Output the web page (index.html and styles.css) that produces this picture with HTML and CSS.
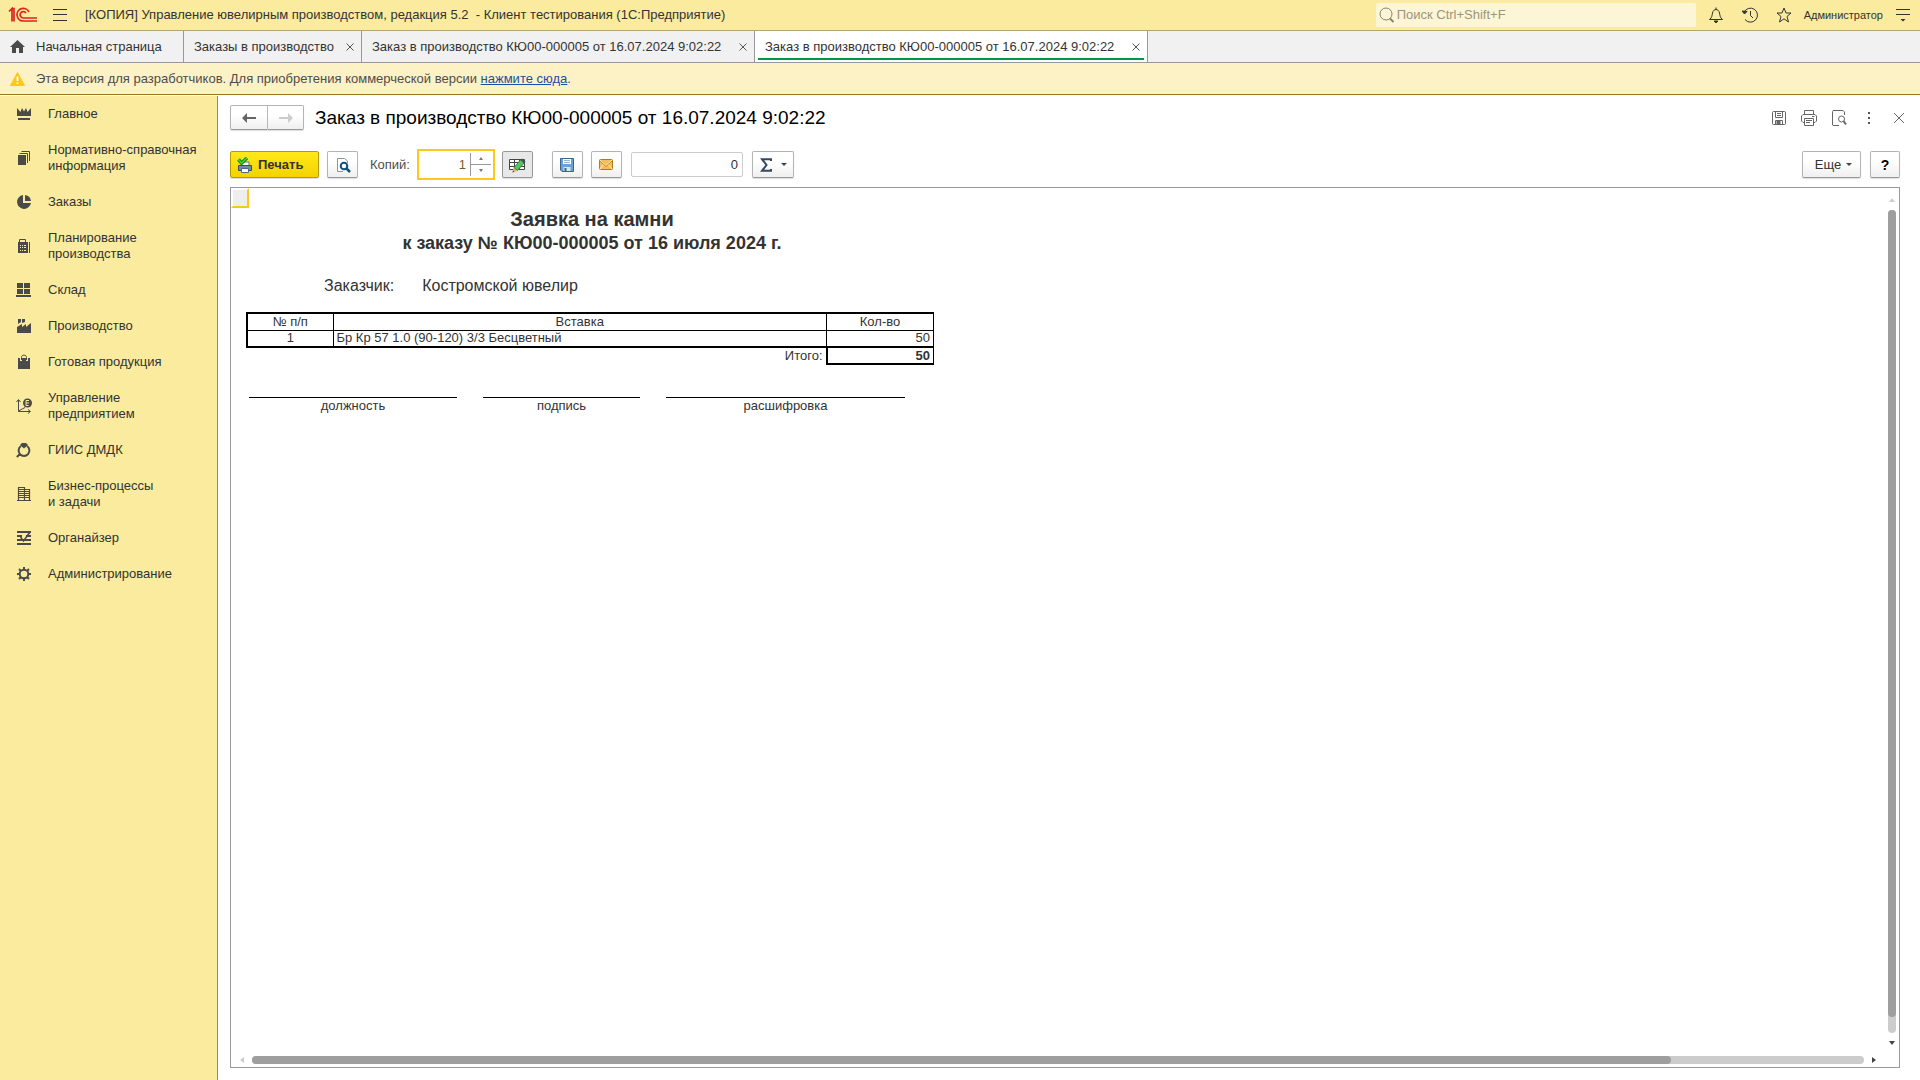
FILE: index.html
```html
<!DOCTYPE html>
<html lang="ru">
<head>
<meta charset="utf-8">
<title>Управление ювелирным производством</title>
<link rel="stylesheet" href="styles.css">
</head>
<body>
<header class="topbar">
  <svg class="logo" width="30" height="16" viewBox="0 0 30 16" fill="none" stroke="#d9251c" stroke-width="2" aria-label="1С"><path d="M1 4.500L4 1.500V14.500M6 14.500V1.500H3.500M21 5A6.300 6.300 0 1 0 15 14H29M18 6A3.200 3.200 0 1 0 15 11H29" stroke-width="1.700"/></svg>
  <button class="flat menu-btn" aria-label="Меню"><svg width="14" height="12" stroke="#333" viewBox="0 0 14 12"><path d="M0 .5H14M0 5.500H14M0 11.500H14"/></svg></button>
  <h1 class="app-title">[КОПИЯ] Управление ювелирным производством, редакция 5.2 &nbsp;- Клиент тестирования (1С:Предприятие)</h1>
  <label class="search">
    <svg width="16" height="16" viewBox="0 0 16 16" fill="none" stroke="#8b8468"><circle cx="7" cy="7" r="6"/><path d="M11 11.500L14.500 15" stroke-width="2"/></svg>
    <input type="text" placeholder="Поиск Ctrl+Shift+F" aria-label="Поиск">
  </label>
  <div class="top-actions">
    <button class="flat" aria-label="Уведомления"><svg width="16" height="16" viewBox="0 0 16 16" fill="none" stroke="#333"><path d="M1.500 12.500C4 10.500 4 8.500 4.500 6C5 3.500 6.500 2.500 8 2.500S11 3.500 11.500 6C12 8.500 12 10.500 14.500 12.500ZM8 2.500V.5"/><path d="M6 14h4l-2 2z" fill="#333"/></svg></button>
    <button class="flat" aria-label="История"><svg width="16" height="16" viewBox="0 0 16 16" fill="none" stroke="#333"><path d="M2 5.500A7 7 0 1 1 3 12.500M8.500 4V8.500L11 11"/><path d="M0 4l2.500 3L5 4.500z" fill="#333"/></svg></button>
    <button class="flat" aria-label="Избранное"><svg width="16" height="16" viewBox="0 0 16 16" fill="none" stroke="#333"><path d="M8 1L10 6H15L11 9.500L12.500 15L8 11.800L3.500 15L5 9.500L1 6H6Z"/></svg></button>
  </div>
  <a class="user" href="#">Администратор</a>
  <button class="flat" aria-label="Сервис"><svg width="14" height="14" viewBox="0 0 14 14" stroke="#333"><path d="M0 1.500H14M0 6.500H14"/><path d="M4.500 11h5L7 13.500z" fill="#333" stroke="none"/></svg></button>
</header>

<nav class="tabs" aria-label="Открытые окна">
  <a class="tab home" href="#"><svg width="15" height="13" viewBox="0 0 15 13" fill="#4a4a4a"><path d="M7.500 0L15 7H13V13H9V8H6V13H2V7H0Z"/></svg>Начальная страница</a>
  <div class="tab list"><a href="#">Заказы в производство</a><button class="flat" aria-label="Закрыть"><svg width="8" height="8" viewBox="0 0 8 8" stroke="#555"><path d="M.5 .5L7.500 7.500M7.500 .5L.5 7.500"/></svg></button></div>
  <div class="tab order"><a href="#">Заказ в производство КЮ00-000005 от 16.07.2024 9:02:22</a><button class="flat" aria-label="Закрыть"><svg width="8" height="8" viewBox="0 0 8 8" stroke="#555"><path d="M.5 .5L7.500 7.500M7.500 .5L.5 7.500"/></svg></button></div>
  <div class="tab order active"><a href="#">Заказ в производство КЮ00-000005 от 16.07.2024 9:02:22</a><button class="flat" aria-label="Закрыть"><svg width="8" height="8" viewBox="0 0 8 8" stroke="#555"><path d="M.5 .5L7.500 7.500M7.500 .5L.5 7.500"/></svg></button></div>
</nav>

<div class="notice">
  <svg width="15" height="14" viewBox="0 0 15 14"><path d="M7.500 .5L14.500 13.500H.5Z" fill="#fbc81e" stroke="#fbc81e" stroke-linejoin="round"/><path d="M7.500 4.500V9M7.500 10.500V12" stroke="#fff" stroke-width="1.800"/></svg>
  <p>Эта версия для разработчиков. Для приобретения коммерческой версии <a href="#">нажмите сюда</a>.</p>
</div>

<div class="workspace">
  <nav class="sidebar" aria-label="Разделы">
    <a href="#"><svg viewBox="0 0 16 16"><path d="M1 2L4.500 6L6 2L8 5.500L10 2L11.500 6L15 2V10H1ZM2 12H14V14H2Z"/></svg>Главное</a>
    <a href="#"><svg viewBox="0 0 16 16"><path d="M2 5H10V15H2Z"/><path d="M3.500 3.500H11.500V13M5.500 1.500H13.500V11" fill="none" stroke="#4a4a4a"/></svg>Нормативно-справочная<br>информация</a>
    <a href="#"><svg viewBox="0 0 16 16"><path d="M7 1A7 7 0 1 0 15 9H7Z"/><path d="M9 1A7 7 0 0 1 15 7H9Z"/></svg>Заказы</a>
    <a href="#"><svg viewBox="0 0 16 16"><path d="M3.500 5V1.500H9.500V5M13.500 4V15" fill="none" stroke="#4a4a4a"/><path fill-rule="evenodd" d="M2 4H12V15H2ZM4 7V8H5V7ZM6 7V8H7V7ZM8 7V8H10V7ZM4 9V10H5V9ZM6 9V10H7V9ZM8 9V10H10V9ZM4 12V13H5V12ZM6 12V13H7V12ZM8 12V13H10V12Z"/></svg>Планирование<br>производства</a>
    <a href="#"><svg viewBox="0 0 16 16"><path d="M1 1H7V6H1ZM8 1H14V6H8ZM1 7H7V12H1ZM8 7H14V12H8ZM0 13H15V15H0Z"/></svg>Склад</a>
    <a href="#"><svg viewBox="0 0 16 16"><path d="M1 15V9L6 6V9L10 6V9L15 5V15ZM2 1H5V4L2 6ZM6 1H9V4L6 5Z"/></svg>Производство</a>
    <a href="#"><svg viewBox="0 0 16 16"><path d="M2 4H14V15H2Z"/><path d="M5 7V4C5 .5 11 .5 11 4V7" fill="none" stroke="#faeb9e" stroke-width="2"/><path d="M5.500 6V3.500C5.500 .3 10.500 .3 10.500 3.500V6" fill="none" stroke="#4a4a4a"/></svg>Готовая продукция</a>
    <a href="#"><svg viewBox="0 0 16 16"><path d="M2.500 2V13.500H14M2.500 13L9 9.500M.5 4L2.500 1.500L4.500 4M12 11.500L14.500 13.500L12 15.500" fill="none" stroke="#4a4a4a"/><circle cx="11.500" cy="5" r="4.500"/><path d="M10 2.500H13M10 5H13M10 7.500H12.500M10 2.500V7.500" stroke="#faeb9e" fill="none"/></svg>Управление<br>предприятием</a>
    <a href="#"><svg viewBox="0 0 16 16"><path d="M5 4A5.400 5.400 0 1 0 11 4M4 12L.8 15" fill="none" stroke="#4a4a4a" stroke-width="2"/><path d="M6 1H10L12 3L8 6.500L4 3Z"/></svg>ГИИС ДМДК</a>
    <a href="#"><svg viewBox="0 0 16 16"><path d="M1 14.500H15M2.500 14V1.500H8.500V14M8.500 3.500H13.500V14M3 3.500H8M3 5.500H13M3 7.500H13M3 9.500H13M3 11.500H13" fill="none" stroke="#4a4a4a" stroke-width="1.200"/></svg>Бизнес-процессы<br>и задачи</a>
    <a href="#"><svg viewBox="0 0 16 16"><path d="M1 2H15M1 6H6M10 6H15M1 10H15M1 14H15" fill="none" stroke="#4a4a4a" stroke-width="2"/><path d="M14 2L7.500 11L4.500 7" fill="none" stroke="#4a4a4a" stroke-width="1.500"/></svg>Органайзер</a>
    <a href="#"><svg viewBox="0 0 16 16"><circle cx="8" cy="8" r="4.300" fill="none" stroke="#4a4a4a" stroke-width="2"/><path d="M8 1V4M8 12V15M1 8H4M12 8H15M3 3L5 5M11 11L13 13M13 3L11 5M5 11L3 13" stroke="#4a4a4a" stroke-width="2"/></svg>Администрирование</a>
  </nav>

  <main class="page">
    <div class="page-head">
      <div class="history">
        <button class="btn" aria-label="Назад"><svg width="14" height="10" viewBox="0 0 14 10" fill="#666"><path d="M0 5L5 0V4H14V6H5V10Z"/></svg></button>
        <button class="btn" aria-label="Вперед" disabled><svg width="14" height="10" viewBox="0 0 14 10" fill="#ccc"><path d="M14 5L9 0V4H0V6H9V10Z"/></svg></button>
      </div>
      <h2>Заказ в производство КЮ00-000005 от 16.07.2024 9:02:22</h2>
      <div class="page-actions">
        <button class="flat" aria-label="Сохранить"><svg width="16" height="16" viewBox="0 0 16 16" fill="none" stroke="#666"><rect x="1.500" y="1.500" width="13" height="13" rx="1"/><path d="M4.500 1.500V7.500H11.500V1.500M6 3.500H10M6 5.500H10M4.500 14.500V10.500H11.500V14.500"/><path d="M6 11H9V14H6Z" fill="#666"/></svg></button>
        <button class="flat" aria-label="Печать"><svg width="16" height="16" viewBox="0 0 16 16" fill="none" stroke="#666"><path d="M3.500 4.500V.5H12.500V4.500M3.500 12.500H2L.5 11V6L2 4.500H14L15.500 6V11L14 12.500H12.500M3.500 8.500H12.500V15.500H3.500ZM5 10.500H11M5 12.500H9M11 6.500H13.500"/></svg></button>
        <button class="flat" aria-label="Просмотр"><svg width="16" height="16" viewBox="0 0 16 16" fill="none" stroke="#666"><path d="M8 15.500H2L1.500 15V1.500L2 .5H12L13.500 2V5"/><circle cx="10.500" cy="9" r="3"/><path d="M12.500 11L15 14.500" stroke-width="2"/></svg></button>
        <button class="flat" aria-label="Действия"><svg width="16" height="16" viewBox="0 0 16 16" fill="#555"><path d="M7 2H9V4H7ZM7 7H9V9H7ZM7 12H9V14H7Z"/></svg></button>
        <button class="flat" aria-label="Закрыть"><svg width="16" height="16" viewBox="0 0 16 16" stroke="#666"><path d="M3 3L13 13M13 3L3 13"/></svg></button>
      </div>
    </div>

    <div class="toolbar">
      <button class="btn primary"><svg width="16" height="16" viewBox="0 0 16 16"><path d="M5 5H12V9H5Z" fill="#fff" stroke="#5a748c"/><path d="M1.500 8.500H14.500V13.500H1.500Z" fill="#6d8da8" stroke="#334e68"/><path d="M4.500 11.500H11.500V15.500H4.500Z" fill="#fff" stroke="#52697d"/><path d="M1.500 2.500L4.500 6L10 1" fill="none" stroke="#168a13" stroke-width="3.500"/><path d="M1.500 2.500L4.500 6L10 1" fill="none" stroke="#4bd13a" stroke-width="1.500"/></svg>Печать</button>
      <button class="btn icon" aria-label="Предварительный просмотр"><svg width="16" height="16" viewBox="0 0 16 16" fill="none"><path d="M12.500 6V4L9.500 1.500H2.500V14.500H8" fill="#fff" stroke="#8294a5"/><circle cx="9" cy="9" r="3.300" stroke="#12527d" stroke-width="2"/><path d="M11.500 11.500L15 15" stroke="#12527d" stroke-width="2.500"/></svg></button>
      <label class="copies-label" for="copies">Копий:</label>
      <div class="copies">
        <input id="copies" type="text" value="1">
        <div class="spinner">
          <button class="flat" aria-label="Больше"><svg width="4" height="3"><path d="M0 3L2 0L4 3Z" fill="#777"/></svg></button>
          <button class="flat" aria-label="Меньше"><svg width="4" height="3"><path d="M0 0L2 3L4 0Z" fill="#777"/></svg></button>
        </div>
      </div>
      <button class="btn icon pressed" aria-label="Редактирование"><svg width="18" height="16" viewBox="0 0 18 16"><path d="M1.500 2.500H16.500V12.500H1.500ZM1.500 5.500H16.500M1.500 9.500H16.500M6.500 2.500V12.500M11.500 2.500V12.500" fill="#fff" stroke="#444"/><path d="M6 10.500L12.500 3L16 6L9.500 13.500Z" fill="#5cc264" stroke="#2b8a3c"/><path d="M4.500 15.500L5.500 10.500L9.500 14Z" fill="#e7b574"/><path d="M4.500 15.500L5 13.500L6.500 14.500Z" fill="#444"/><path d="M12.500 3L14 1.500L17.500 4.500L16 6Z" fill="#41505d"/></svg></button>
      <div class="group">
        <button class="btn icon" aria-label="Сохранить файл"><svg width="14" height="14" viewBox="0 0 14 14"><path d="M.5 .5H13.500V13.500H2L.5 12Z" fill="#719fce" stroke="#39648f"/><path d="M3 1H11V6H3Z" fill="#fff"/><path d="M4 2.500H10M4 4.500H10" stroke="#9db2c5"/><path d="M3.500 9H10.500V13H3.500Z" fill="#d9e4ed"/><path d="M4.500 10H6.500V13H4.500Z" fill="#39648f"/></svg></button>
        <button class="btn icon" aria-label="Отправить по почте"><svg width="14" height="11" viewBox="0 0 14 11"><rect x=".5" y=".5" width="13" height="10" rx="1" fill="#f2bd5c" stroke="#b77912"/><path d="M1 1L7 6.500L13 1M1 10L5 5M13 10L9 5" fill="none" stroke="#fff0cd"/><path d="M1 2L7 7.500L13 2" fill="none" stroke="#c58a25"/></svg></button>
        <input class="sum" type="text" value="0" aria-label="Сумма">
        <button class="btn sigma" aria-label="Сумма ячеек"><svg width="12" height="14" viewBox="0 0 12 14"><path d="M11 3V1.200H2L6.500 7L2 12.800H11V11" fill="none" stroke="#34495e" stroke-width="2"/></svg><svg width="6" height="3"><path d="M0 0H6L3 3Z" fill="#444"/></svg></button>
      </div>
      <div class="right">
        <button class="btn more">Еще<svg width="6" height="3"><path d="M0 0H6L3 3Z" fill="#444"/></svg></button>
        <button class="btn help">?</button>
      </div>
    </div>

    <section class="sheet">
      <div class="cell-cursor"></div>
      <article class="document">
        <h3>Заявка на камни</h3>
        <h4>к заказу № КЮ00-000005 от 16 июля 2024 г.</h4>
        <p class="customer"><span>Заказчик:</span><span>Костромской ювелир</span></p>
        <table>
          <colgroup><col class="c-num"><col><col class="c-qty"></colgroup>
          <thead><tr><th>№ п/п</th><th>Вставка</th><th>Кол-во</th></tr></thead>
          <tbody><tr><td class="center">1</td><td>Бр Кр 57 1.0 (90-120) 3/3 Бесцветный</td><td class="num">50</td></tr></tbody>
          <tfoot><tr><td colspan="2" class="num">Итого:</td><td class="num total">50</td></tr></tfoot>
        </table>
        <div class="signatures"><span>должность</span><span>подпись</span><span>расшифровка</span></div>
      </article>
      <div class="vscroll">
        <svg width="6" height="4"><path d="M0 4L3 0L6 4Z" fill="#ccc"/></svg>
        <div class="track"><div class="thumb"></div></div>
        <svg width="6" height="4"><path d="M0 0L3 4L6 0Z" fill="#444"/></svg>
      </div>
      <div class="hscroll">
        <svg width="4" height="6"><path d="M4 0L0 3L4 6Z" fill="#ccc"/></svg>
        <div class="track"><div class="thumb"></div></div>
        <svg width="4" height="6"><path d="M0 0L4 3L0 6Z" fill="#444"/></svg>
      </div>
    </section>
  </main>
</div>
</body>
</html>
```
FILE: styles.css
```css
* { box-sizing: border-box; }
body {
  margin: 0;
  height: 100vh;
  display: flex;
  flex-direction: column;
  font: 13px/16px "Liberation Sans", Arial, sans-serif;
  color: #333;
  background: #fff;
}
h1, h2, h3, h4, p { margin: 0; font-weight: normal; }
a { color: inherit; text-decoration: none; }
svg { display: block; flex: none; }
button, input { font: inherit; color: inherit; margin: 0; }
input { min-width: 0; outline: none; }
.flat { display: block; padding: 0; border: 0; background: none; }

.topbar {
  flex: none;
  display: flex;
  align-items: center;
  height: 31px;
  padding: 0 10px 0 8px;
  background: #faeb9e;
  border-bottom: 1px solid #b0a76f;
}
.menu-btn { margin: 0 18px 0 15px; }
.app-title { font-size: 13px; white-space: pre; }
.search {
  display: flex;
  align-items: center;
  gap: 2px;
  width: 320px;
  height: 24px;
  margin-left: auto;
  padding-left: 3px;
  background: #fdf6d6;
  border-radius: 2px;
}
.search input { flex: 1; border: 0; padding: 0; background: none; }
.search input::placeholder { color: #9b957a; opacity: 1; }
.top-actions { display: flex; gap: 18px; margin: 0 12px; }
.user { margin-right: 13px; font-size: 11px; }

.tabs {
  flex: none;
  display: flex;
  height: 32px;
  background: #f1f1f1;
  border-bottom: 1px solid #999;
}
.tab {
  position: relative;
  display: flex;
  align-items: center;
  justify-content: space-between;
  padding: 0 7px 0 10px;
  border-right: 1px solid #999;
}
.tab.home { min-width: 184px; justify-content: flex-start; gap: 11px; }
.tab.list { min-width: 178px; }
.tab.order { min-width: 393px; }
.tab.active { background: #fff; }
.tab.active::after {
  content: "";
  position: absolute;
  left: 3px;
  right: 3px;
  bottom: 2px;
  height: 2px;
  background: #00964b;
}

.notice {
  flex: none;
  display: flex;
  align-items: center;
  gap: 11px;
  height: 32px;
  padding-left: 10px;
  background: #fdf2c6;
  border-bottom: 1px solid #937a1b;
  color: #4d4d4d;
}
.notice a { color: #1a4fa3; text-decoration: underline; }

.workspace { flex: 1; display: flex; min-height: 0; padding-top: 1px; }
.sidebar { width: 218px; flex: none; background: #faeb9e; border-right: 1px solid #938b5e; }
.sidebar a { display: flex; align-items: center; gap: 16px; padding: 10px 0 10px 16px; }
.sidebar svg { width: 16px; height: 16px; fill: #4a4a4a; }

.page { flex: 1; min-width: 0; display: flex; flex-direction: column; padding: 9px 20px 12px 12px; }
.btn {
  display: flex;
  align-items: center;
  justify-content: center;
  height: 27px;
  padding: 0;
  border: 1px solid #b4b4b4;
  border-bottom-color: #999;
  border-radius: 2px;
  background: linear-gradient(#fff 40%, #efefef);
  box-shadow: 0 1px 1px #ddd;
}
.page-head { display: flex; align-items: center; height: 25px; }
.history { display: flex; }
.history .btn { width: 38px; height: 25px; border-radius: 2px 0 0 2px; }
.history .btn + .btn { width: 36px; border-left: 0; border-radius: 0 2px 2px 0; }
.page-head h2 { margin-left: 11px; font-size: 19px; line-height: 24px; color: #000; }
.page-actions { display: flex; gap: 14px; margin: 0 -7px 0 auto; }

.toolbar { display: flex; align-items: center; height: 31px; margin: 19px 0 7px; }
.primary {
  width: 89px;
  gap: 5px;
  justify-content: flex-start;
  padding-left: 6px;
  font-weight: bold;
  color: #333;
  background: linear-gradient(#ffe81a, #f3d300);
  border-color: #b59b00;
}
.icon { width: 31px; }
.primary + .icon { margin-left: 8px; }
.copies-label { margin: 0 7px 0 12px; color: #4d4d4d; }
.copies { display: flex; width: 78px; height: 31px; border: 2px solid #fbc91c; background: #fff; }
.copies input { flex: 1; width: 0; padding: 0 4px; border: 0; text-align: right; color: #7a5c1c; }
.spinner { display: flex; flex-direction: column; width: 21px; margin: 2px 2px 2px 0; border-left: 1px solid #999; }
.spinner .flat { flex: 1; display: flex; align-items: center; justify-content: center; }
.spinner .flat + .flat { border-top: 1px solid #999; }
.pressed { margin-left: 7px; background: #e8e8e8; border-color: #999; }
.group { display: flex; align-items: center; gap: 8px; margin-left: 19px; }
.sum {
  width: 112px;
  height: 25px;
  margin: 0 1px;
  padding: 0 4px;
  border: 1px solid #ccc;
  border-radius: 2px;
  text-align: right;
}
.sigma { width: 42px; gap: 9px; padding-left: 2px; }
.right { display: flex; gap: 9px; margin-left: auto; }
.more { width: 59px; gap: 5px; padding-left: 4px; }
.help { width: 30px; font-weight: bold; font-size: 14px; color: #000; }

.sheet {
  flex: 1;
  position: relative;
  display: grid;
  grid-template: minmax(0, 1fr) 14px / minmax(0, 1fr) 14px;
  min-height: 0;
  border: 1px solid #999;
}
.cell-cursor {
  position: absolute;
  left: 0;
  top: 0;
  width: 18px;
  height: 20px;
  background: #eee;
  border: 2px solid #fff;
  border-right-color: #fbc91c;
  border-bottom-color: #fbc91c;
}
.document { width: 703px; padding: 19px 0 0 15px; }
.document h3 { font-size: 20px; line-height: 24px; font-weight: bold; text-align: center; padding-left: 4px; }
.document h4 { font-size: 18px; line-height: 24px; font-weight: bold; text-align: center; padding-left: 4px; }
.customer { display: flex; gap: 28px; padding: 21px 0 16px 78px; font-size: 16px; line-height: 20px; }
.document table { width: 100%; table-layout: fixed; border-collapse: collapse; line-height: 14px; }
.c-num { width: 86px; }
.c-qty { width: 107px; }
th, td { height: 17px; padding: 0 3px; border: 1px solid #000; font-weight: normal; text-align: left; }
th, .center { text-align: center; }
thead th { border-top: 2px solid #000; }
tbody td { border-bottom: 2px solid #000; }
thead th:first-child, tbody td:first-child { border-left: 2px solid #000; }
.num { text-align: right; }
tfoot td { border: 0; }
tfoot .total { font-weight: bold; border: 2px solid #000; border-right-width: 1px; }
.signatures { display: grid; grid-template-columns: 208px 157px 239px; column-gap: 26px; padding: 32px 0 0 3px; line-height: 14px; }
.signatures span { border-top: 1px solid #000; text-align: center; padding-top: 1px; }

.vscroll { display: flex; flex-direction: column; align-items: center; gap: 8px; padding: 10px 0 8px; }
.hscroll { display: flex; align-items: center; gap: 8px; padding: 0 9px; }
.track { flex: 1; background: #ccc; border-radius: 4px; }
.vscroll .track { width: 8px; }
.hscroll .track { height: 8px; }
.thumb { height: 100%; background: #9e9e9e; border-radius: 4px; }
.vscroll .thumb { height: 98%; }
.hscroll .thumb { width: 88%; }
```
